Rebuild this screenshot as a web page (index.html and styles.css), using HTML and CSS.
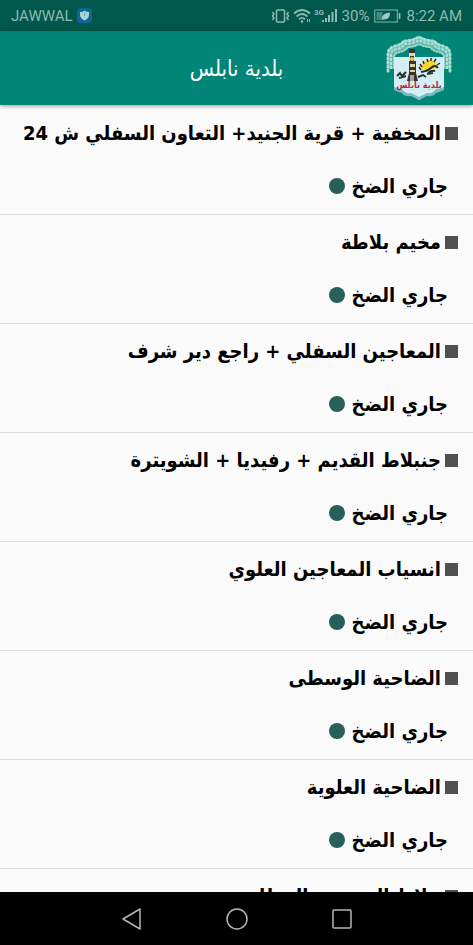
FILE: index.html
```html
<!DOCTYPE html>
<html lang="ar" dir="rtl">

<head>
    <meta charset="UTF-8">
    <meta name="viewport" content="width=device-width, initial-scale=1.0">
    <title>بلدية نابلس</title>
    <link rel="stylesheet" href="styles.css">
</head>

<body>
    <div class="status" dir="ltr">
        <span>JAWWAL</span>
        <svg class="shield" width="15" height="15" viewBox="0 0 15 15">
            <rect width="15" height="15" rx="4" fill="#0b6699"/>
            <path d="M7.5 2.5Q9.5 4 12 4V7.500Q11.500 10.500 7.500 12.500Q3.500 10.500 3 7.500V4Q5.500 4 7.500 2.500Z" fill="#a9d3d3"/>
            <path d="M7.500 5v3" stroke="#6da9b4"/>
        </svg>
        <div class="signals">
            <!-- vibrate -->
            <svg width="19" height="16" viewBox="0 0 19 16" fill="none" stroke="#8fbab2" stroke-width="1.500">
                <rect x="5.500" y="2" width="8" height="12" rx="1"/>
                <path d="M1.500 4l1.500 2-1.500 2 1.500 2-1.500 2M17.500 4l-1.500 2 1.500 2-1.500 2 1.500 2"/>
            </svg>
            <!-- wifi -->
            <svg width="18" height="16" viewBox="0 0 18 16" fill="none" stroke="#8fbab2" stroke-width="1.800">
                <path d="M1 5.500Q9-1.500 17 5.500M3.500 8.500Q9 3.500 14.500 8.500M6 11.300Q9 8.500 12 11.300"/>
                <circle cx="9" cy="13.500" r="1.300" fill="#8fbab2" stroke="none"/>
                <path d="M14.500 11v3M16.500 11v3" stroke-width="1"/>
            </svg>
            <!-- network -->
            <svg width="25" height="16" viewBox="0 0 25 16" fill="#8fbab2">
                <text class="net" x="0" y="7">3G</text>
                <path d="M8 12h2v2h-2zM11 10h2v4h-2zM14 7h2v7h-2zM17.500 4h2v10h-2zM21 1h2v13h-2z"/>
            </svg>
            <span>30%</span>
            <!-- battery -->
            <svg class="battery" width="27" height="14" viewBox="0 0 27 14">
                <rect x=".7" y="1" width="22.600" height="12" fill="none" stroke="#6fa79d" stroke-width="1.200"/>
                <rect x="2.500" y="3" width="6" height="8" fill="#3f8a7e"/>
                <path d="M8 11Q7 4 16 3.500Q16 11 9.500 10.500Z" fill="#a3cbc4"/>
                <path d="M25.500 4v6" stroke="#8fbab2" stroke-width="1.800"/>
            </svg>
            <span>8:22 AM</span>
        </div>
    </div>

    <header class="bar">
        <svg class="logo" width="68" height="66" viewBox="0 0 68 66">
            <!-- lace arch -->
            <path d="M6 34V20Q6 15 12 14Q17 13 20 9Q27 9 34 5Q41 9 48 9Q51 13 56 14Q62 15 62 20V34" fill="none" stroke="#62b8ac" stroke-width="8"/>
            <path d="M3 36V19Q3 13 10 11Q16 10 19 6Q27 6 34 2Q41 6 49 6Q52 10 58 11Q65 13 65 19V36" fill="none" stroke="#a9dcd5" stroke-width="3" stroke-linecap="round" stroke-dasharray="1 3"/>
            <path d="M6 34V20Q6 15 12 14Q17 13 20 9Q27 9 34 5Q41 9 48 9Q51 13 56 14Q62 15 62 20V34" fill="none" stroke="#b3e0da" stroke-width="2" stroke-dasharray="3 1"/>
            <path d="M9 33V21Q10 18 15 17Q20 16 23 12Q29 12 34 9Q39 12 45 12Q48 16 53 17Q58 18 59 21V33" fill="none" stroke="#9bd5cd" stroke-width="2" stroke-linecap="round" stroke-dasharray="1 2"/>
            <path d="M9 22H24V16H30V22H59V54Q55 56 51 57Q48 61 42 60L34 65L26 60Q20 61 17 57Q13 56 9 54Z" fill="#d3eef4"/>
            <path d="M9 52Q13 54 17 54Q20 59 26 58L34 62L42 58Q48 59 51 54Q55 54 59 52V55Q55 57 51 58Q48 62 42 61L34 65L26 61Q20 62 17 58Q13 57 9 55Z" fill="#79bcc0"/>
            <!-- clock tower -->
            <path d="M24 14H30V18H29V26H31V38L33 46H22L24 38V26H25V18H24Z" fill="#3a332b"/>
            <path d="M25 18h4v3h-4zM25 29h5v3h-5zM25 35h5v2h-5z" fill="#e5cf9a"/>
            <circle cx="27" cy="24" r="2" fill="#f0d22c"/>
            <path d="M25 40h4v6h-4z" fill="#a9a49a"/>
            <!-- sun over the hills -->
            <path d="M37 35A8 8 0 0 1 51 28L53 33Z" fill="#f5d52b"/>
            <path d="M36 35L34 32M37 32L35 29M39 29L38 26M43 27L42 24M46 26V23M49 27L51 24M52 30L55 28" stroke="#302b22" stroke-width="1.500"/>
            <path d="M36 37Q43 36 46 33Q50 29 53 33M43 38Q47 35 50 36" fill="none" stroke="#252d2a" stroke-width="2"/>
            <path d="M12 41L15 38L17 41L21 37M14 43L21 41M33 42L38 40L41 42M42 39L48 38" fill="none" stroke="#29332f" stroke-width="2"/>
            <text class="logo-name" x="34" y="53" text-anchor="middle">بلدية نابلس</text>
        </svg>
        <h1>بلدية نابلس</h1>
    </header>

    <main>
        <ul class="areas">
            <li>
                <h2>المخفية + قرية الجنيد+ التعاون السفلي ش 24</h2>
                <p>جاري الضخ</p>
            </li>
            <li>
                <h2>مخيم بلاطة</h2>
                <p>جاري الضخ</p>
            </li>
            <li>
                <h2>المعاجين السفلي + راجع دير شرف</h2>
                <p>جاري الضخ</p>
            </li>
            <li>
                <h2>جنبلاط القديم + رفيديا + الشويترة</h2>
                <p>جاري الضخ</p>
            </li>
            <li>
                <h2>انسياب المعاجين العلوي</h2>
                <p>جاري الضخ</p>
            </li>
            <li>
                <h2>الضاحية الوسطى</h2>
                <p>جاري الضخ</p>
            </li>
            <li>
                <h2>الضاحية العلوية</h2>
                <p>جاري الضخ</p>
            </li>
            <li>
                <h2>خلاط المعجون المطلة</h2>
            </li>
        </ul>
    </main>

    <nav class="keys" dir="ltr">
        <button type="button" aria-label="رجوع">
            <svg width="24" height="24" viewBox="0 0 24 24"><path d="M3 12L20 2V22Z"/></svg>
        </button>
        <button type="button" aria-label="الرئيسية">
            <svg width="24" height="24" viewBox="0 0 24 24"><circle cx="12" cy="12" r="10"/></svg>
        </button>
        <button type="button" aria-label="التطبيقات">
            <svg width="24" height="24" viewBox="0 0 24 24"><rect x="3" y="3" width="18" height="18" rx="1"/></svg>
        </button>
    </nav>
</body>

</html>
```

FILE: styles.css
```css
* {
    box-sizing: border-box;
}

body {
    margin: 0;
    height: 100vh;
    display: flex;
    flex-direction: column;
    background-color: #fafafa;
    font-family: "DejaVu Sans Condensed", "DejaVu Sans", sans-serif;
}

h1, h2, p, ul {
    margin: 0;
    padding: 0;
}

.status {
    flex: none;
    display: flex;
    align-items: center;
    height: 31px;
    padding: 0 11px;
    background-color: #00574b;
    color: #8fbab2;
    font: 15px/32px Roboto, sans-serif;
}

.shield {
    margin-left: 4px;
}

.signals {
    display: flex;
    align-items: center;
    gap: 3px;
    margin-left: auto;
}

.battery {
    margin: 0 2px;
}

.net {
    font: bold 8px Roboto, sans-serif;
}

.bar {
    flex: none;
    display: grid;
    grid-template-columns: 1fr auto 1fr;
    align-items: center;
    height: 74px;
    padding: 0 20px;
    background-color: #008577;
    box-shadow: 0 1px 4px rgba(0, 0, 0, .4);
    z-index: 1;
}

.bar h1 {
    color: #fff;
    font-size: 22px;
    font-weight: normal;
}

.logo-name {
    fill: #c01f35;
    font: bold 9px "DejaVu Sans Condensed", "DejaVu Sans", sans-serif;
}

main {
    flex: 1;
    min-height: 0;
    padding-top: 1px;
    overflow: hidden;
}

.areas {
    list-style: none;
}

.areas li {
    padding: 11px 15px 12px;
    border-bottom: 1px solid #dcdcdc;
    color: #000;
}

.areas h2,
.areas p {
    display: flex;
    align-items: center;
    font-size: 20px;
    font-weight: bold;
    line-height: 32px;
    white-space: nowrap;
}

.areas h2 {
    gap: 4px;
}

.areas h2::before {
    content: "";
    flex: none;
    width: 13px;
    height: 13px;
    background-color: #505050;
}

.areas p {
    gap: 7px;
    margin-top: 21px;
    padding-right: 10px;
}

.areas p::after {
    content: "";
    width: 16px;
    height: 16px;
    border-radius: 50%;
    background-color: #285f58;
}

.keys {
    flex: none;
    display: flex;
    justify-content: center;
    align-items: center;
    gap: 57px;
    height: 53px;
    background-color: #000;
}

.keys button {
    display: flex;
    padding: 12px;
    border: 0;
    background: none;
}

.keys svg {
    fill: none;
    stroke: #b5b5b5;
    stroke-width: 1.5;
    stroke-linejoin: round;
}
```
